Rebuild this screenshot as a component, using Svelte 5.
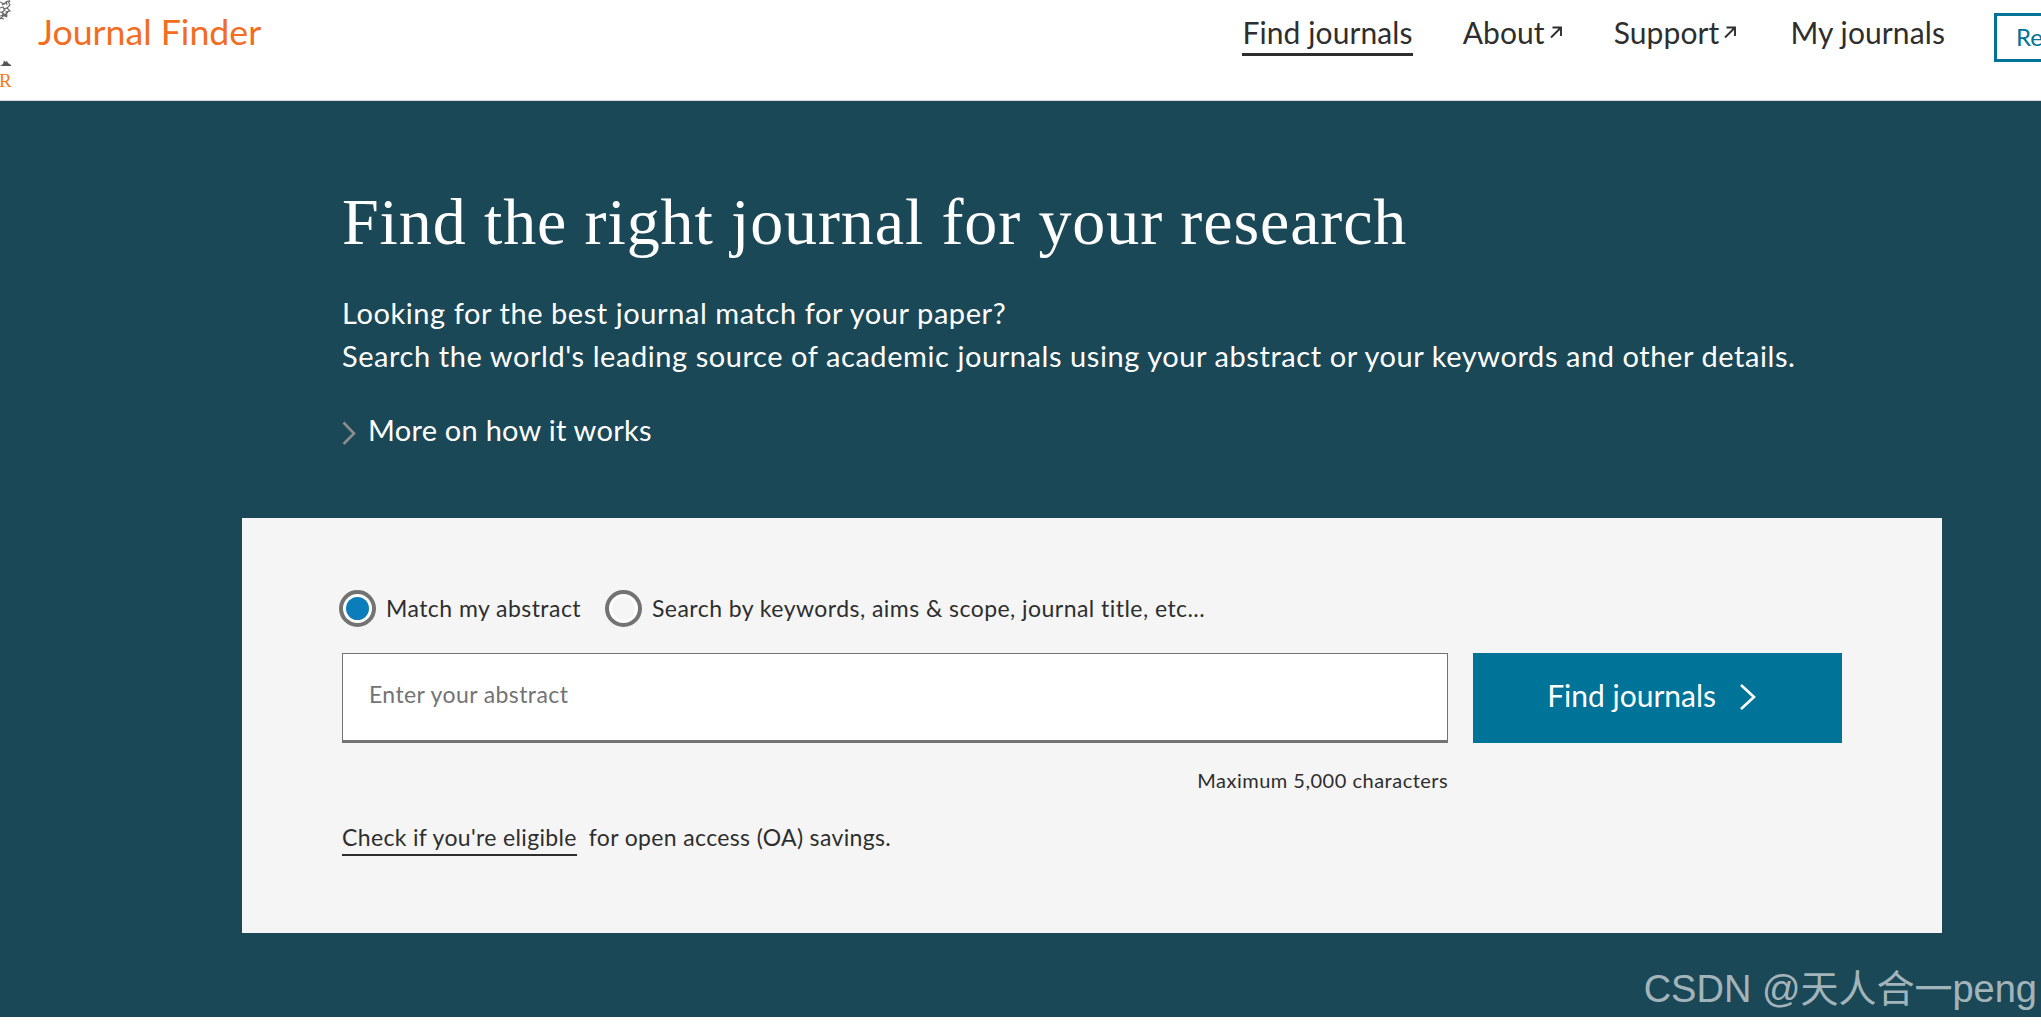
<script>
  let mode = $state('abstract');
  const nav = [
    { label: 'Find journals', active: true },
    { label: 'About', ext: true },
    { label: 'Support', ext: true },
    { label: 'My journals' }
  ];
</script>

<div class="page">
  <header class="top">
    <div class="logo">
      <svg class="crest" width="12" height="72" viewBox="0 0 12 72" aria-hidden="true">
        <g fill="none" stroke="#666" stroke-width="1.1">
          <path d="M0 2l4 2 4-3 2 4-3 3 3 3-4 1 1 4-4 0-3 3" />
          <path d="M0 8l3-1 2 3-3 2 3 3-5 1" />
          <path d="M6 1l1 4M2 14l5 3M7 8l-4 1M0 12l3 1M5 3l-3 2M8 12l-3 3M0 18l4 1M9 0l1 2" />
        </g>
        <path d="M0 66l3-2 1-4 1 2 2-1 1 2 3 2v1H0z" fill="#555" />
      </svg>
      <span class="logo-r">R</span>
    </div>
    <div class="brand">Journal Finder</div>
    <nav class="nav">
      {#each nav as item}
        <a class="nav-link" class:active={item.active} href="#top">
          {item.label}{#if item.ext}<svg class="ext" width="14" height="14" viewBox="0 0 14 14" aria-hidden="true"><path d="M2 12.500 12 2.500M3.500 2.500h8.500v8.500" fill="none" stroke="#2e2e2e" stroke-width="1.900" /></svg>{/if}
        </a>
      {/each}
      <a class="reg" href="#top">Register</a>
    </nav>
  </header>

  <main class="hero">
    <h1>Find the right journal for your research</h1>
    <p class="lead">Looking for the best journal match for your paper?<br />Search the world's leading source of academic journals using your abstract or your keywords and other details.</p>
    <div class="more">
      <svg width="14" height="24" viewBox="0 0 14 24" aria-hidden="true"><path d="M1.500 1.500 12 12.500 1.500 23" fill="none" stroke="#8c8c8c" stroke-width="2.600" /></svg>
      <span>More on how it works</span>
    </div>

    <section class="card">
      <div class="radios">
        <button class="radio" onclick={() => (mode = 'abstract')}>
          <span class="ring" class:on={mode === 'abstract'}><span class="dot"></span></span>
          Match my abstract
        </button>
        <button class="radio" onclick={() => (mode = 'keywords')}>
          <span class="ring" class:on={mode === 'keywords'}><span class="dot"></span></span>
          Search by keywords, aims &amp; scope, journal title, etc...
        </button>
      </div>
      <div class="row">
        <div class="field">
          <input class="input" placeholder="Enter your abstract" />
          <div class="hint">Maximum 5,000 characters</div>
        </div>
        <button class="go">
          <span>Find journals</span>
          <svg width="17" height="28" viewBox="0 0 17 28" aria-hidden="true"><path d="M2 2 15 14 2 26" fill="none" stroke="#fff" stroke-width="2.600" /></svg>
        </button>
      </div>
      <p class="oa"><a href="#top">Check if you're eligible</a><span>for open access (OA) savings.</span></p>
    </section>

    <div class="mark">CSDN @天人合一peng</div>
  </main>
</div>

<style>
  :global(body) {
    margin: 0;
    background: #fff;
    overflow: hidden;
  }
  .page {
    width: 2041px;
    height: 1025px;
    overflow: hidden;
    font-family: Lato, "Noto Sans", sans-serif;
    color: #2e2e2e;
  }
  .top {
    height: 100px;
    border-bottom: 1px solid #d8d8d8;
    display: flex;
    align-items: flex-start;
    position: relative;
  }
  .logo {
    position: absolute;
    left: 0;
    top: 0;
    width: 12px;
    height: 100px;
    overflow: hidden;
  }
  .crest {
    display: block;
  }
  .logo-r {
    position: absolute;
    left: -1px;
    top: 69px;
    font: 19px/24px "Liberation Serif", serif;
    color: #f47a20;
  }
  .brand {
    margin-left: 38px;
    margin-top: 11px;
    font-size: 35.700px;
    line-height: 42px;
    color: #f36d21;
  }
  .nav {
    margin-left: auto;
    margin-right: -99px;
    display: flex;
    align-items: flex-start;
    gap: 51px;
    padding-top: 12px;
    letter-spacing: 0.1px;
  }
  .nav-link {
    height: 41px;
    margin-top: 0;
    border-bottom: 3px solid transparent;
    color: #2e2e2e;
    text-decoration: none;
    font-size: 30px;
    line-height: 40px;
    white-space: nowrap;
    display: flex;
    align-items: flex-start;
  }
  .nav-link:nth-child(2) {
    margin-left: -1px;
  }
  .nav-link:nth-child(4) {
    margin: 0 -2px 0 2px;
  }
  .nav-link.active {
    border-bottom-color: #2e2e2e;
  }
  .ext {
    margin: 13px 0 0 4px;
  }
  .reg {
    box-sizing: border-box;
    width: 146px;
    height: 49px;
    margin-top: 1px;
    border: 3px solid #007398;
    color: #007398;
    font-size: 24px;
    line-height: 42px;
    padding-left: 19px;
    text-decoration: none;
  }
  .hero {
    height: 916px;
    background: #1b4857;
    color: #fff;
    padding-top: 1px;
    position: relative;
    box-sizing: border-box;
  }
  h1 {
    margin: 82px 0 0 342px;
    font: 400 66px/76px "Liberation Serif", serif;
    letter-spacing: 0.880px;
    white-space: nowrap;
  }
  .lead {
    margin: 31px 0 0 342px;
    font-size: 29px;
    letter-spacing: 0.570px;
    line-height: 43px;
    white-space: nowrap;
  }
  .more {
    margin: 35px 0 0 342px;
    display: flex;
    align-items: center;
    gap: 12px;
    font-size: 29px;
    letter-spacing: 0.25px;
    line-height: 36px;
    height: 36px;
  }
  .more svg {
    margin-top: 5px;
  }
  .card {
    box-sizing: border-box;
    margin: 70px 0 0 242px;
    width: 1700px;
    height: 415px;
    background: #f5f5f5;
    color: #2e2e2e;
    padding: 72px 100px 0;
  }
  .radios {
    display: flex;
    gap: 27px;
    height: 36px;
  }
  .radio {
    display: flex;
    align-items: center;
    gap: 10px;
    padding: 0;
    margin-left: -3px;
    border: 0;
    background: none;
    color: inherit;
    font: inherit;
    font-size: 23px;
    letter-spacing: 0.45px;
    white-space: nowrap;
  }
  .ring {
    box-sizing: border-box;
    width: 37px;
    height: 37px;
    border: 4px solid #737373;
    border-radius: 50%;
    background: #fff;
    display: flex;
    align-items: center;
    justify-content: center;
  }
  .dot {
    width: 23px;
    height: 23px;
    border-radius: 50%;
    background: #f5f5f5;
  }
  .ring.on .dot {
    background: #0c7dbb;
  }
  .row {
    display: flex;
    gap: 25px;
    margin-top: 27px;
    align-items: flex-start;
  }
  .field {
    width: 1107px;
  }
  .input {
    display: block;
    box-sizing: border-box;
    width: 100%;
    height: 90px;
    padding: 0 26px 6px;
    border: 1px solid #737373;
    border-bottom-width: 3px;
    border-radius: 0;
    background: #fff;
    font: inherit;
    font-size: 23px;
    letter-spacing: 0.4px;
    outline: none;
  }
  .input::placeholder {
    color: #737373;
    opacity: 1;
  }
  .hint {
    margin-top: 24px;
    text-align: right;
    font-size: 20px;
    letter-spacing: 0.5px;
    line-height: 26px;
  }
  .go {
    width: 369px;
    height: 90px;
    border: 0;
    background: #007398;
    color: #fff;
    font: inherit;
    font-size: 30px;
    display: flex;
    align-items: center;
    justify-content: center;
    gap: 23px;
    padding: 0 12px 6px 0;
  }
  .go svg {
    margin-top: 3px;
  }
  .oa {
    margin: 0;
    margin-top: 29px;
    display: flex;
    gap: 12px;
    font-size: 23px;
    letter-spacing: 0.35px;
    line-height: 30px;
  }
  .oa a {
    color: inherit;
    text-decoration: none;
    border-bottom: 2px solid #2e2e2e;
    height: 32px;
  }
  .mark {
    position: absolute;
    right: 4px;
    bottom: 6px;
    font: 38px/44px "Liberation Sans", "Noto Sans CJK SC", sans-serif;
    color: rgba(255, 255, 255, 0.62);
    white-space: nowrap;
  }
</style>
